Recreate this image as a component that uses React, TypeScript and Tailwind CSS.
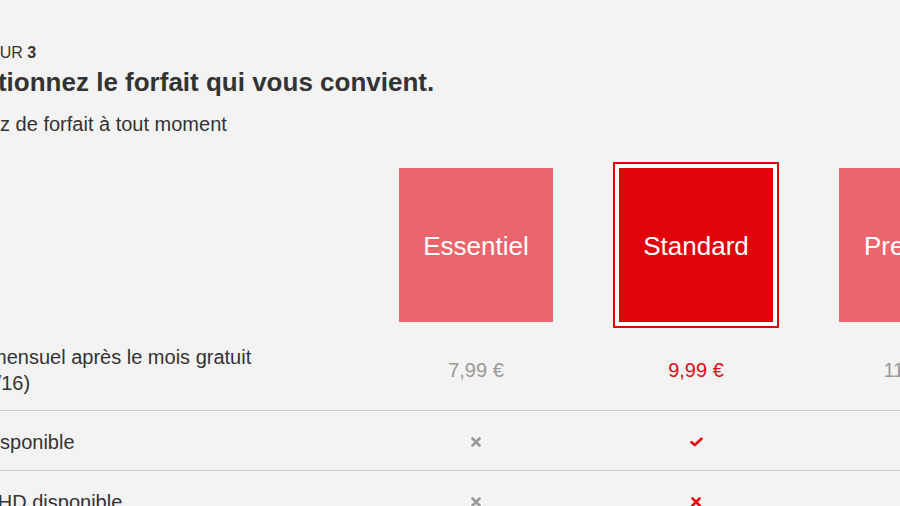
import React from "react";

type Plan = {
  name: string;
  price: string;
  hd: boolean;
  uhd: boolean;
};

const plans: Plan[] = [
  { name: "Essentiel", price: "7,99 €", hd: false, uhd: false },
  { name: "Standard", price: "9,99 €", hd: true, uhd: false },
  { name: "Premium", price: "11,99 €", hd: true, uhd: true },
];

const selected = "Standard";

function Cross({ active }: { active: boolean }) {
  return (
    <svg width="10" height="10" viewBox="0 0 10 10" className={active ? "text-[#e50914]" : "text-[#999999]"}>
      <path d="M1.5 1.5 L8.5 8.5 M8.5 1.5 L1.5 8.5" stroke="currentColor" strokeWidth="2.6" strokeLinecap="square" />
    </svg>
  );
}

function Check() {
  return (
    <svg width="13" height="10" viewBox="0 0 13 10" className="text-[#e50914]">
      <path d="M1.5 5.2 L4.8 8 L11.5 1.8" stroke="currentColor" strokeWidth="2.6" fill="none" strokeLinecap="round" strokeLinejoin="round" />
    </svg>
  );
}

function Mark({ on, active }: { on: boolean; active: boolean }) {
  return on ? <Check /> : <Cross active={active} />;
}

function PlanBox({ plan }: { plan: Plan }) {
  const isSelected = plan.name === selected;
  const box = (
    <div
      className={
        "flex h-[154px] w-[154px] items-center justify-center pt-[3px] text-[26px] text-white " +
        (isSelected ? "bg-[#e10308]" : "bg-[#ea666c]")
      }
    >
      {plan.name}
    </div>
  );
  if (!isSelected) return box;
  return <div className="border-2 border-[#e10308] bg-white p-[4px]">{box}</div>;
}

export default function App() {
  const gridCols = "grid grid-cols-[416px_220px_220px_220px]";

  return (
    <div className="h-[506px] w-[900px] overflow-hidden bg-[#f3f3f3] font-['Liberation_Sans',Arial,sans-serif] text-[#333333]">
      <div className="-ml-[70px] w-[1100px] pt-[45px]">
        <div className="-ml-[10px] text-[16px] leading-4">
          ÉTAPE 1 SUR <span className="font-bold">3</span>
        </div>
        <h1 className="mt-[5px] text-[26px] font-bold leading-8">Sélectionnez le forfait qui vous convient.</h1>
        <p className="mt-[13px] text-[20px] leading-[26px]">Changez de forfait à tout moment</p>

        <div className="ml-[20px] mt-[25px]">
          <div className={gridCols + " h-[166px]"}>
            <div />
            {plans.map((p) => (
              <div key={p.name} className="flex items-center justify-center">
                <PlanBox plan={p} />
              </div>
            ))}
          </div>

          <div className={gridCols + " h-[83px] items-center border-b border-[#cccccc] pt-[2px]"}>
            <div className="max-w-[320px] text-[20px] leading-[26px]">
              Prix mensuel après le mois gratuit (9/10/16)
            </div>
            {plans.map((p) => (
              <div
                key={p.name}
                className={
                  "text-center text-[20px] " + (p.name === selected ? "text-[#e50914]" : "text-[#999999]")
                }
              >
                {p.price}
              </div>
            ))}
          </div>

          <div className={gridCols + " h-[60px] items-center border-b border-[#cccccc] pt-[3px]"}>
            <div className="text-[20px]">HD disponible</div>
            {plans.map((p) => (
              <div key={p.name} className="flex justify-center">
                <Mark on={p.hd} active={p.name === selected} />
              </div>
            ))}
          </div>

          <div className={gridCols + " h-[60px] items-center border-b border-[#cccccc] pt-[3px]"}>
            <div className="text-[20px]">Ultra HD disponible</div>
            {plans.map((p) => (
              <div key={p.name} className="flex justify-center">
                <Mark on={p.uhd} active={p.name === selected} />
              </div>
            ))}
          </div>
        </div>
      </div>
    </div>
  );
}
